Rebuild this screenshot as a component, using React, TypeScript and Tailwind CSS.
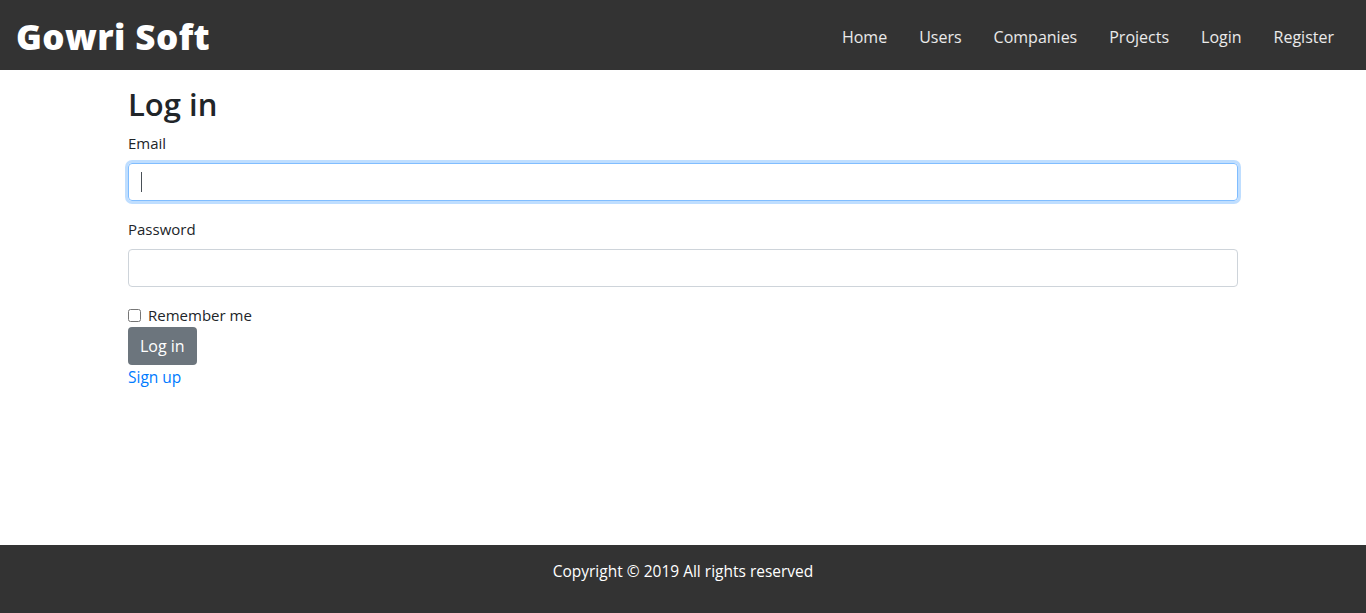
import { useState } from "react";

const navLinks = ["Home", "Users", "Companies", "Projects", "Login", "Register"];

export default function App() {
  const [email, setEmail] = useState("");
  const [password, setPassword] = useState("");
  const [remember, setRemember] = useState(false);

  return (
    <div
      className="min-h-screen flex flex-col bg-white text-[#212529]"
      style={{ fontFamily: '"Open Sans", "Noto Sans", sans-serif' }}
    >
      {/* NAVBAR */}
      <nav className="h-[70px] bg-[#333333] flex items-center justify-between pl-4 pr-4">
        <a href="#" className="text-white text-[35px] font-extrabold tracking-[0.4px] leading-none mt-[2px]">
          Gowri Soft
        </a>
        <ul className="flex items-center mt-[3px]">
          {navLinks.map((l) => (
            <li key={l}>
              <a href="#" className="block px-4 text-[16px] text-white/90 hover:text-white">
                {l}
              </a>
            </li>
          ))}
        </ul>
      </nav>

      {/* LOGIN FORM */}
      <main className="flex-1">
        <div className="w-[1140px] mx-auto px-[15px] pt-[15px]">
          <h2 className="text-[31px] font-semibold leading-[38px] mb-2">Log in</h2>
          <form onSubmit={(e) => e.preventDefault()}>
            <div className="mb-4">
              <label className="block text-[15px] leading-6 mb-2">Email</label>
              <div className="relative">
                <input
                  type="email"
                  value={email}
                  onChange={(e) => setEmail(e.target.value)}
                  className="w-full h-[38px] px-3 text-[15px] rounded-[4px] border border-[#80bdff] outline-none shadow-[0_0_0_3px_rgba(0,123,255,0.25)]"
                />
                {email === "" && (
                  <span className="absolute left-[13px] top-[9px] w-px h-[20px] bg-[#495057]" />
                )}
              </div>
            </div>
            <div className="mb-4">
              <label className="block text-[15px] leading-6 mb-2">Password</label>
              <input
                type="password"
                value={password}
                onChange={(e) => setPassword(e.target.value)}
                className="w-full h-[38px] px-3 text-[15px] rounded-[4px] border border-[#ced4da] outline-none"
              />
            </div>
            <div className="flex items-center h-6">
              <input
                type="checkbox"
                checked={remember}
                onChange={(e) => setRemember(e.target.checked)}
                className="w-[13px] h-[13px] m-0"
              />
              <label className="ml-[7px] text-[15px] leading-6">Remember me</label>
            </div>
            <button
              type="submit"
              className="h-[38px] px-3 bg-[#6c757d] hover:bg-[#5a6268] text-white text-[16px] rounded-[4px]"
            >
              Log in
            </button>
          </form>
          <a href="#" className="block text-[#007bff] text-[15.5px] leading-6 hover:underline">
            Sign up
          </a>
        </div>
      </main>

      {/* FOOTER */}
      <footer className="h-[68px] bg-[#333333] flex justify-center pt-[14px]">
        <p className="text-white text-[15.5px] leading-6">Copyright © 2019 All rights reserved</p>
      </footer>
    </div>
  );
}
